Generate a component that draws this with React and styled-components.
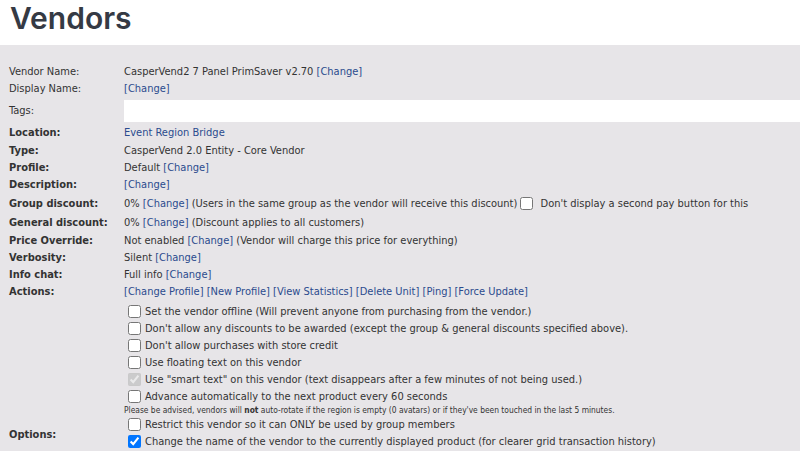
import React from 'react';
import styled, { createGlobalStyle } from 'styled-components';

const GlobalStyle = createGlobalStyle`
  html, body {
    margin: 0;
    padding: 0;
    background: #ffffff;
  }
  body {
    font-family: "DejaVu Sans Condensed", "DejaVu Sans", sans-serif;
    color: #333333;
  }
`;

const Page = styled.div`
  width: 800px;
  height: 451px;
  overflow: hidden;
`;

const Title = styled.h1`
  margin: 0;
  height: 45px;
  padding-left: 10px;
  font-family: "Inter", "Liberation Sans", sans-serif;
  font-size: 30px;
  font-weight: 600;
  line-height: 36px;
  color: #353a44;
`;

const Panel = styled.div`
  background: #e7e5e8;
  padding: 18px 0 20px 9px;
  min-height: 400px;
`;

const Grid = styled.div`
  display: grid;
  grid-template-columns: 115px 1fr;
  font-size: 11px;
  line-height: 17px;
`;

const Label = styled.div`
  font-weight: ${(p) => (p.$bold ? 700 : 400)};
  height: ${(p) => p.$h || 17}px;
  line-height: ${(p) => p.$h || 17}px;
  ${(p) => p.$middle && 'height: auto; align-self: center;'}
`;

const Value = styled.div`
  height: ${(p) => p.$h || 17}px;
  line-height: ${(p) => p.$h || 17}px;
  white-space: nowrap;
`;

const A = styled.a`
  color: #2b4b8e;
  text-decoration: none;
  cursor: pointer;
`;

const TagsCell = styled.div`
  height: 27px;
  display: flex;
  align-items: center;
`;

const TagInput = styled.input`
  box-sizing: border-box;
  width: 100%;
  height: 22px;
  margin: 0;
  border: none;
  background: #ffffff;
  outline: none;
  padding: 0 4px;
`;

const Box = styled.input.attrs({ type: 'checkbox' })`
  width: 13px;
  height: 13px;
  margin: 0 4px 0 ${(p) => p.$ml ?? 4}px;
  flex: none;
  vertical-align: -3px;
`;

const OptionList = styled.div`
  display: flex;
  flex-direction: column;
  padding-top: 3px;
`;

const Option = styled.label`
  display: flex;
  align-items: center;
  height: 17px;
  white-space: nowrap;
`;

const Note = styled.div`
  font-size: 8.4px;
  line-height: 11px;
  white-space: nowrap;
`;

const Ch = ({ children = 'Change' }) => <A>[{children}]</A>;

const options = [
  { text: 'Set the vendor offline (Will prevent anyone from purchasing from the vendor.)' },
  { text: "Don't allow any discounts to be awarded (except the group & general discounts specified above)." },
  { text: "Don't allow purchases with store credit" },
  { text: 'Use floating text on this vendor' },
  { text: 'Use "smart text" on this vendor (text disappears after a few minutes of not being used.)', checked: true, disabled: true },
  { text: 'Advance automatically to the next product every 60 seconds', note: true },
  { text: 'Restrict this vendor so it can ONLY be used by group members' },
  { text: 'Change the name of the vendor to the currently displayed product (for clearer grid transaction history)', checked: true },
  { text: 'Hide this vendor from the marketplace listing' },
  { text: 'Show product stock count in hover text' },
  { text: 'Send purchase notifications by IM' },
  { text: 'Send purchase notifications by email' },
  { text: 'Allow gifting from this vendor' },
  { text: 'Allow demo requests from this vendor' },
  { text: 'Play a sound when an item is purchased' },
];

export default function App() {
  return (
    <Page>
      <GlobalStyle />
      <Title>Vendors</Title>
      <Panel>
        <Grid>
          <Label>Vendor Name:</Label>
          <Value>CasperVend2 7 Panel PrimSaver v2.70 <Ch /></Value>

          <Label>Display Name:</Label>
          <Value><Ch /></Value>

          <Label $middle>Tags:</Label>
          <TagsCell><TagInput type="text" /></TagsCell>

          <Label $bold $h={18}>Location:</Label>
          <Value $h={18}><A>Event Region Bridge</A></Value>

          <Label $bold>Type:</Label>
          <Value>CasperVend 2.0 Entity - Core Vendor</Value>

          <Label $bold>Profile:</Label>
          <Value>Default <Ch /></Value>

          <Label $bold>Description:</Label>
          <Value><Ch /></Value>

          <Label $bold $h={21}>Group discount:</Label>
          <Value $h={21}>
            0% <Ch /> (Users in the same group as the vendor will receive this discount) <Box $ml={0} /> Don't display a second pay button for this
          </Value>

          <Label $bold $h={18}>General discount:</Label>
          <Value $h={18}>0% <Ch /> (Discount applies to all customers)</Value>

          <Label $bold>Price Override:</Label>
          <Value>Not enabled <Ch /> (Vendor will charge this price for everything)</Value>

          <Label $bold>Verbosity:</Label>
          <Value>Silent <Ch /></Value>

          <Label $bold>Info chat:</Label>
          <Value>Full info <Ch /></Value>

          <Label $bold>Actions:</Label>
          <Value>
            <Ch>Change Profile</Ch> <Ch>New Profile</Ch> <Ch>View Statistics</Ch> <Ch>Delete Unit</Ch> <Ch>Ping</Ch> <Ch>Force Update</Ch>
          </Value>

          <Label $bold $middle>Options:</Label>
          <OptionList>
            {options.map((o) => (
              <React.Fragment key={o.text}>
                <Option>
                  <Box defaultChecked={o.checked} disabled={o.disabled} />
                  {o.text}
                </Option>
                {o.note && (
                  <Note>
                    Please be advised, vendors will <b>not</b> auto-rotate if the region is empty (0 avatars) or if they've been touched in the last 5 minutes.
                  </Note>
                )}
              </React.Fragment>
            ))}
          </OptionList>
        </Grid>
      </Panel>
    </Page>
  );
}
